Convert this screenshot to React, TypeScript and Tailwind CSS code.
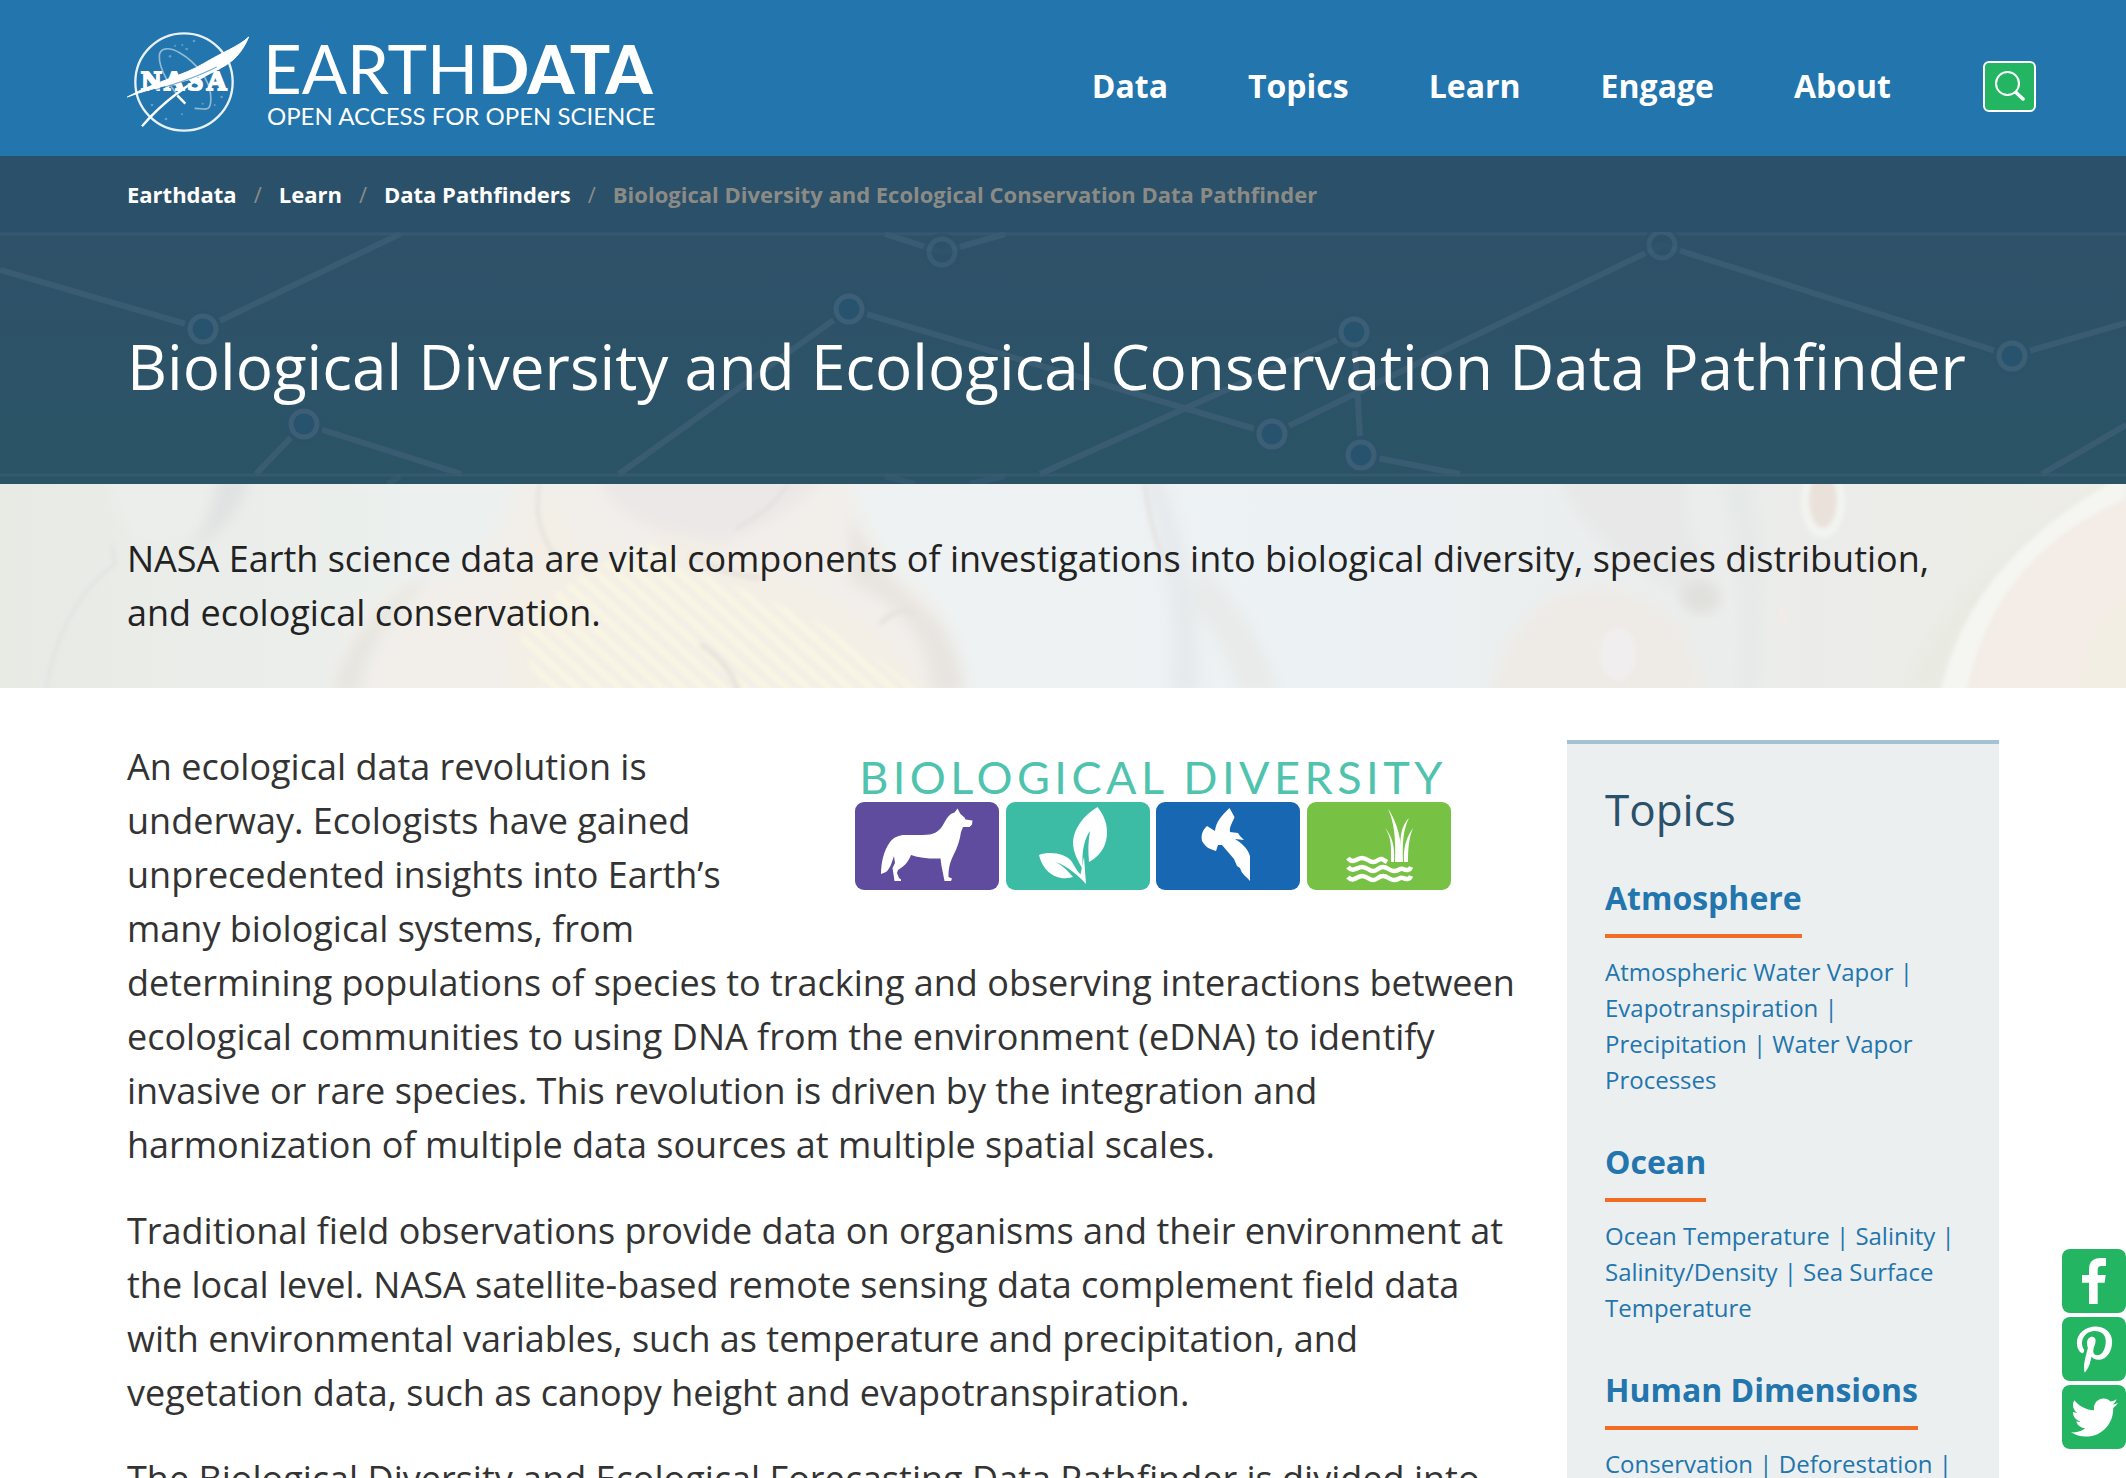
import { FaPinterestP, FaTwitter } from "react-icons/fa";

const navItems = ["Data", "Topics", "Learn", "Engage", "About"];
const crumbs = ["Earthdata", "Learn", "Data Pathfinders"];

const topics = [
  {
    title: "Atmosphere",
    links: ["Atmospheric Water Vapor", "Evapotranspiration", "Precipitation", "Water Vapor Processes"],
  },
  {
    title: "Ocean",
    links: ["Ocean Temperature", "Salinity", "Salinity/Density", "Sea Surface Temperature"],
  },
  {
    title: "Human Dimensions",
    links: ["Conservation", "Deforestation"],
  },
];

function NasaMark() {
  return (
    <svg viewBox="21 21 366 300" className="h-[100px] w-[122px] shrink-0" fill="none" stroke="#fff" aria-hidden="true">
      <circle cx="192" cy="171" r="146" strokeWidth="7" opacity="0.9" />
      <path
        d="M192 230C150 190 116 130 118 92C120 66 150 66 180 84C232 114 270 170 272 210C274 240 270 254 252 252L224 250"
        strokeWidth="5"
        opacity="0.5"
      />
      <g fontSize="84" fontFamily="Liberation Serif" fontWeight="700" fill="#fff" strokeWidth="6" textAnchor="middle">
        <text x="94" y="196">N</text>
        <text x="162" y="196">A</text>
        <text x="226" y="196">S</text>
        <text x="290" y="196">A</text>
      </g>
      <path d="M22 216C110 168 190 152 250 116C310 80 354 66 386 36C366 84 338 112 300 130C220 170 110 182 22 216Z" fill="#fff" strokeWidth="3" />
      <path d="M70 204C140 186 210 166 290 126" stroke="#2275ad" strokeWidth="4" opacity="0.6" />
      <path d="M66 304C120 240 200 176 300 128" strokeWidth="7" />
      <path d="M172 212L196 236" strokeWidth="7" />
      <g fill="#fff" stroke="none" opacity="0.3">
        <circle cx="222" cy="48" r="4" />
        <circle cx="187" cy="60" r="3" />
        <circle cx="165" cy="62" r="3" />
        <circle cx="200" cy="72" r="4" />
        <circle cx="150" cy="94" r="4" />
        <circle cx="96" cy="240" r="4" />
        <circle cx="138" cy="282" r="4" />
        <circle cx="305" cy="216" r="4" />
        <circle cx="284" cy="240" r="3" />
        <circle cx="186" cy="268" r="3" />
        <circle cx="248" cy="236" r="3" />
      </g>
    </svg>
  );
}

function Network() {
  const nodes = [
    [203, 97], [304, 192], [849, 77], [942, 20], [1354, 100], [1272, 202], [1361, 223], [1662, 13], [2012, 124],
  ];
  return (
    <svg viewBox="0 0 2126 252" preserveAspectRatio="xMidYMid slice" className="absolute inset-0 h-full w-full" aria-hidden="true">
      <g stroke="#3a5c73" strokeWidth="6" fill="none">
        <path d="M0 38L203 97L400 2M256 242L304 192L461 242M619 242L849 77L1272 202L1662 13L2012 124L2126 91M885 2L942 20L1005 2M1040 242L1354 100L1361 223L1460 242M2042 242L2126 193" />
        <path d="M0 2H2126M0 243H2126" strokeWidth="3" opacity="0.7" />
        <path d="M388 252L400 244M885 244L915 252M970 252L1005 244" opacity="0.6" />
      </g>
      {nodes.map(([x, y]) => (
        <g key={`${x}-${y}`} opacity={y < 40 ? 0.8 : 1}>
          <circle cx={x} cy={y} r="19" fill="#2c5269" />
          <circle cx={x} cy={y} r="13" fill={y < 40 ? "#2c526a" : "#28536f"} stroke="#3c5f76" strokeWidth="5" />
        </g>
      ))}
    </svg>
  );
}

function Specimen() {
  return (
    <svg viewBox="0 0 2126 204" preserveAspectRatio="xMidYMid slice" className="absolute inset-0 h-full w-full" aria-hidden="true">
      <defs>
        <filter id="soft" x="-20%" y="-20%" width="140%" height="140%">
          <feGaussianBlur stdDeviation="7" />
        </filter>
        <filter id="fine" x="-20%" y="-20%" width="140%" height="140%">
          <feGaussianBlur stdDeviation="2" />
        </filter>
        <linearGradient id="ground" x1="0" x2="1" y1="0" y2="0">
          <stop offset="0" stopColor="#e8eae4" />
          <stop offset="0.2" stopColor="#ecf0ee" />
          <stop offset="0.45" stopColor="#eef2f2" />
          <stop offset="0.62" stopColor="#ecf1f4" />
          <stop offset="0.85" stopColor="#ebecea" />
          <stop offset="1" stopColor="#eeede6" />
        </linearGradient>
        <pattern id="ribs" width="26" height="14" patternUnits="userSpaceOnUse" patternTransform="rotate(42)">
          <rect width="26" height="6" fill="#faf6e3" />
        </pattern>
      </defs>
      <rect width="2126" height="204" fill="url(#ground)" />
      <g filter="url(#soft)">
        <path d="M108 -10Q120 60 160 64Q240 30 236 -10Z" fill="#ebeeea" />
        <path d="M250 -10Q240 40 190 66Q215 30 218 -10Z" fill="#dfe2e2" />
        <path d="M330 220C330 150 370 100 430 95C490 85 500 40 520 -10H850C850 30 880 60 900 90C950 120 960 170 972 220Z" fill="#f2efeb" />
        <path d="M545 0C540 60 470 130 520 220H930C900 150 830 110 760 80C700 60 690 20 660 50C640 90 600 90 570 50Z" fill="#f3efe6" />
        <path d="M600 -10C600 30 650 50 720 60C780 40 800 20 830 -10Z" fill="#ece8e7" />
        <path d="M332 210Q350 130 430 92L415 110Q370 150 360 210Z" fill="#e6e6e0" />
        <path d="M850 30Q880 90 920 120Q960 150 965 210H930Q930 130 850 100Z" fill="#e8e5e1" />
        <path d="M1488 220C1500 150 1540 100 1600 104C1670 110 1700 150 1702 220Z" fill="#eeebe6" />
        <path d="M1560 -10C1580 60 1640 80 1710 130L1720 110C1690 60 1680 20 1690 -10Z" fill="#e7e8e7" />
        <path d="M1140 -10Q1180 100 1170 210H1200Q1200 90 1160 -10Z" fill="#e6eaec" />
        <path d="M1200 80Q1260 140 1280 210H1240Q1220 150 1190 120Z" fill="#e9ebea" />
        <path d="M1720 -10Q1750 90 1740 210H1755Q1768 80 1750 -10Z" fill="#e5e9e8" />
        <path d="M1900 210Q1950 80 2126 -10V10Q1980 90 1940 210Z" fill="#e9ebe3" />
      </g>
      <g filter="url(#fine)">
        <path d="M540 210L520 150Q560 90 650 60L700 90Q850 140 920 210Z" fill="url(#ribs)" />
        <path d="M45 210Q60 120 115 80L112 60" stroke="#dfe3e3" strokeWidth="3" fill="none" />
        <path d="M790 -4Q775 25 735 45M1145 0Q1150 50 1170 90M540 0Q530 40 560 80" stroke="#e2dfdc" strokeWidth="3" fill="none" />
        <path d="M690 70Q720 90 760 94M700 160Q730 180 740 210M880 140Q900 120 915 130" stroke="#e6e2dd" strokeWidth="5" fill="none" />
        <path d="M1940 210C1955 150 1985 70 2115 -4H2126V210Z" fill="#f5f6f1" />
        <path d="M1966 210C1978 150 2010 60 2140 8V210Z" fill="#f3ece7" />
        <path d="M2080 210Q2090 130 2130 110V210Z" fill="#f3eee3" />
        <ellipse cx="1823" cy="18" rx="22" ry="36" fill="#f2f4f0" />
        <ellipse cx="1823" cy="16" rx="14" ry="28" fill="#eae1db" />
        <ellipse cx="1783" cy="132" rx="6" ry="9" fill="#f1ebe8" />
        <ellipse cx="1618" cy="170" rx="18" ry="26" fill="#f1eeef" />
      </g>
      <ellipse cx="1700" cy="114" rx="18" ry="14" fill="#dfdfdc" filter="url(#soft)" />
    </svg>
  );
}

function DiversityTiles() {
  return (
    <svg viewBox="0 0 596 88" className="w-full" aria-hidden="true">
      <rect width="144" height="88" rx="9" fill="#604c9e" />
      <rect x="151" width="144" height="88" rx="9" fill="#3dbca5" />
      <rect x="301" width="144" height="88" rx="9" fill="#1867b2" />
      <rect x="452" width="144" height="88" rx="9" fill="#77c244" />
      <g fill="#fff">
        <path d="M102.500 6.500L105.500 12L109.500 15.500L110.500 17.500L117.500 18.500L117 22.500L114.500 25L108 25L106 30C105 38 102.500 45 98.500 53C94.500 61 93.500 67 93.500 75L97 76.500L96 79H89.500L86.500 64L85.500 56.500C76 57 65 56 56 53C53 61 48 65 43 68L42 71L44 76L46 77.500V79H39.500L37.500 66L40 61L39 54C37 60 35 67 31 70L26 72C26 60 29 48 35 40C39 35 44 33 50 33H68C78 33 84 30 88 23C92 16 94 12 99.500 10.500Z" />
        <path d="M242.500 5C228 14 219 26 218 40C218 52 224 60 228 68C226 48 230 36 235 29C233 40 233 49 234 60C247 53 252 42 252 30C252 20 248 12 242.500 5Z" />
        <path d="M184 53C194 49 211 51 217 60C220 65 222 69 225.500 72.500L229 55L231 82C224 74 212 64 201 60C208 64 213 69 218 75C202 80 188 70 184 53Z" />
        <path d="M374.500 6C366 14 361 20 360 29L352 24C347 29 346 33 347 39C351 46 355 47 361 49L363 43L367 43L379 57L382 64L385 66C387 73 391 74 395 79V54C392 45 386 41 380 37L389 38L385 34L383 31L375 30C374 24 379 18 379.500 15Z" />
        <path d="M533 6.500C542 20 547 38 547 60H540C541 36 539 20 533 6.500Z" />
        <path d="M554 16C546 24 544 36 546 60H548C547 38 549 26 554 16ZM558 26C551 36 548 46 549 60H553C553 46 554 36 558 26ZM530 26C537 36 536 46 536 60H539C540 44 537 34 530 26Z" />
      </g>
      <g fill="none" stroke="#fff" strokeWidth="4.500">
        <path d="M493 56C498 63 502 56 507 56C512 56 514 60 518 60C523 60 523 56 527 57L532 60" />
        <path d="M493 65C498 71 502 65 507 65C512 65 514 69 518 69C523 69 523 65 528 65C533 65 534 69 539 69C544 69 544 66 548 67C552 69 555 68 556 65" />
        <path d="M493 75C498 81 502 74 507 74C512 74 514 78 518 78C523 78 523 74 528 74C533 74 534 78 539 78C544 78 544 75 548 76C552 78 555 77 556 74" />
      </g>
    </svg>
  );
}

export default function App() {
  return (
    <div className="h-screen overflow-x-hidden overflow-y-auto bg-white font-['Open_Sans',sans-serif] text-[#333] [scrollbar-width:none]">
      <header className="flex h-[156px] items-center justify-between bg-[#2275ad] pr-[90px] pl-[127px] text-white">
        <a href="#home" className="flex items-center gap-[14px] pt-2" aria-label="Earthdata: open access for open science">
          <NasaMark />
          <span className="flex flex-col gap-1 font-['Lato',sans-serif]">
            <span className="text-[67px] leading-[64px]">
              EARTH<span className="font-black">DATA</span>
            </span>
            <span className="pl-1 text-2xl leading-6">OPEN ACCESS FOR OPEN SCIENCE</span>
          </span>
        </a>
        <nav className="flex items-center gap-[92px] pt-4">
          <ul className="flex gap-20 text-[32px] leading-[48px] font-bold">
            {navItems.map((item) => (
              <li key={item}>
                <a href={`#${item}`}>{item}</a>
              </li>
            ))}
          </ul>
          <button
            type="button"
            aria-label="Search"
            className="flex h-[51px] w-[53px] items-center justify-center rounded-md border-2 border-white bg-[#23b561]"
          >
            <svg viewBox="0 0 30 30" className="size-[30px]" fill="none" stroke="#fff" aria-hidden="true">
              <circle cx="12.500" cy="12.500" r="11.500" strokeWidth="2" />
              <path d="M21 21.500L28 28" strokeWidth="3.500" strokeLinecap="round" />
            </svg>
          </button>
        </nav>
      </header>

      <nav aria-label="Breadcrumb" className="bg-[#2b5069] px-[127px] py-[21px]">
        <ol className="flex text-[22px] leading-[34px] font-bold text-white">
          {crumbs.map((crumb) => (
            <li key={crumb}>
              <a href={`#${crumb}`}>{crumb}</a>
              <span className="px-[17px] font-normal text-[#8b8b86]">/</span>
            </li>
          ))}
          <li className="text-[#8b8b86]" aria-current="page">
            Biological Diversity and Ecological Conservation Data Pathfinder
          </li>
        </ol>
      </nav>

      <section className="relative bg-linear-to-b from-[#2f5169] to-[#2a5466] px-[127px] pt-[86px] pb-[70px]">
        <Network />
        <h1 className="relative text-[62px] leading-[96px] text-white">
          Biological Diversity and Ecological Conservation Data Pathfinder
        </h1>
      </section>

      <section className="relative px-[127px] py-12">
        <Specimen />
        <p className="relative text-4xl leading-[54px] text-[#222]">
          NASA Earth science data are vital components of investigations into biological diversity, species
          distribution, and ecological conservation.
        </p>
      </section>

      <div className="flex items-start gap-12 px-[127px] pt-[52px]">
        <main className="flex flex-1 flex-col gap-8 text-4xl leading-[54px]">
          <div>
            <figure className="float-right w-[732px] px-[68px] pt-3 pb-12">
              <figcaption className="text-center font-['Lato',sans-serif] text-[45px] leading-[50px] tracking-widest whitespace-nowrap text-[#4fc3ae]">
                BIOLOGICAL DIVERSITY
              </figcaption>
              <DiversityTiles />
            </figure>
            <p>
              An ecological data revolution is underway. Ecologists have gained unprecedented insights into Earth’s
              many biological systems, from determining populations of species to tracking and observing interactions
              between ecological communities to using DNA from the environment (eDNA) to identify invasive or rare
              species. This revolution is driven by the integration and harmonization of multiple data sources at
              multiple spatial scales.
            </p>
          </div>
          <p>
            Traditional field observations provide data on organisms and their environment at the local level. NASA
            satellite-based remote sensing data complement field data with environmental variables, such as temperature
            and precipitation, and vegetation data, such as canopy height and evapotranspiration.
          </p>
          <p>The Biological Diversity and Ecological Forecasting Data Pathfinder is divided into</p>
        </main>

        <aside className="w-[432px] border-t-4 border-[#a3c2d6] bg-[#ebeff0] px-[38px] pt-8 pb-10">
          <h2 className="mb-8 text-[44px] leading-[66px] text-[#2b5069]">Topics</h2>
          <div className="flex flex-col gap-10 text-[#2275ad]">
            {topics.map((topic) => (
              <section key={topic.title}>
                <h3 className="mb-4 w-fit border-b-4 border-[#f16c24] pb-3 text-[32px] leading-[48px] font-bold">
                  <a href={`#${topic.title}`}>{topic.title}</a>
                </h3>
                <p className="text-2xl leading-9">
                  {topic.links.map((link, i) => (
                    <span key={link}>
                      <a href={`#${link}`}>{link}</a>
                      {i < topic.links.length - 1 || topic.title === "Human Dimensions" ? " | " : ""}
                    </span>
                  ))}
                </p>
              </section>
            ))}
          </div>
        </aside>
      </div>

      <div className="fixed right-0 bottom-[29px] flex flex-col gap-1 text-white">
        <a href="#facebook" aria-label="Share on Facebook" className="flex size-16 items-center justify-center rounded-lg bg-[#23b561]">
          <svg viewBox="0 0 192 192" className="size-16" fill="#fff" aria-hidden="true">
            <path d="M132 27V51H118Q107 51 107 62V78H131L128 101H107V165H81V101H60V78H81V62Q81 27 116 27Z" />
          </svg>
        </a>
        <a href="#pinterest" aria-label="Share on Pinterest" className="flex size-16 items-center justify-center rounded-lg bg-[#23b561]">
          <FaPinterestP size={47} />
        </a>
        <a href="#twitter" aria-label="Share on Twitter" className="flex size-16 items-center justify-center rounded-lg bg-[#23b561]">
          <FaTwitter size={47} />
        </a>
      </div>
    </div>
  );
}
